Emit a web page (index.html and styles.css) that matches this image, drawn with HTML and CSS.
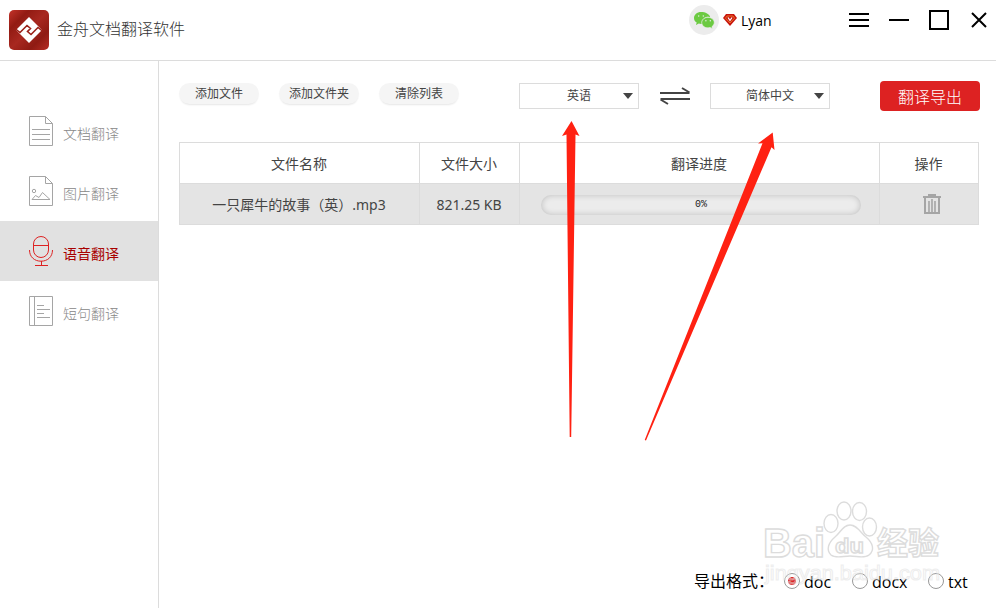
FILE: index.html
```html
<!DOCTYPE html>
<html lang="zh-CN">
<head>
    <meta charset="UTF-8">
    <meta name="viewport" content="width=device-width, initial-scale=1.0">
    <title>金舟文档翻译软件</title>
    <link rel="stylesheet" href="styles.css">
</head>
<body>
    <header class="header">
        <svg class="logo" width="40" height="40" viewBox="0 0 40 40">
            <defs>
                <linearGradient id="logo-bg" x1="0" y1="0" x2="1" y2="1">
                    <stop offset="0" stop-color="#c4332a"/>
                    <stop offset="0.25" stop-color="#921b13"/>
                    <stop offset="0.5" stop-color="#a82820"/>
                    <stop offset="0.75" stop-color="#8f1b13"/>
                    <stop offset="1" stop-color="#b62c23"/>
                </linearGradient>
            </defs>
            <rect width="40" height="40" rx="5" fill="url(#logo-bg)"/>
            <path d="M20 7L33 20L20 33L7 20z" fill="#fff"/>
            <path d="M6 18.500L11 22.500L18 15.500L21.500 18.500L18.500 21.500L22 24.500L29 17.500L34 21.500" fill="none" stroke="#9a2018" stroke-width="1.600"/>
        </svg>
        <h1>金舟文档翻译软件</h1>
        <div class="user">
            <svg width="30" height="30" viewBox="0 0 30 30">
                <circle cx="15" cy="15" r="15" fill="#ececec"/>
                <path d="M12 7c-4 0-7 2.700-7 6 0 2 1 3.500 2.700 4.600L7 20l2.800-1.400c1 .3 2.200.4 3.400.3a6 6 0 0 1 8-6.700C20.500 9 16.500 7 12 7z" fill="#6cca42"/>
                <path d="M19 12.300c-3.500 0-6.300 2.300-6.300 5.300s2.800 5.300 6.300 5.300c.8 0 1.500-.1 2.200-.3l2.300 1.300-.6-2.100c1.500-1 2.400-2.500 2.400-4.200 0-3-2.800-5.300-6.300-5.300z" fill="#6cca42" stroke="#ececec" stroke-width=".8"/>
                <g fill="#ececec">
                    <circle cx="9.700" cy="11" r=".7"/>
                    <circle cx="14.300" cy="11" r=".7"/>
                    <circle cx="16.900" cy="15.800" r=".7"/>
                    <circle cx="21.300" cy="15.800" r=".7"/>
                </g>
            </svg>
            <svg class="vip" width="14" height="12" viewBox="0 0 14 12">
                <path d="M3 0h8l3 4-7 8-7-8z" fill="#c8150f"/>
                <path d="M4 2h6l1.500 2.200L7 9 2.500 4.200z" fill="none" stroke="#f08a2c" stroke-width=".8"/>
                <path d="M5 3.500L7 6.500l2-3" fill="none" stroke="#fff" stroke-width="1.200"/>
            </svg>
            <span>Lyan</span>
        </div>
        <svg class="window-buttons" width="140" height="20" viewBox="0 0 140 20">
            <path d="M1 4h20M1 10h20M1 16h20M41 10h20" stroke="#000" stroke-width="2"/>
            <rect x="82" y="1" width="18" height="18" fill="none" stroke="#000" stroke-width="2"/>
            <path d="M124 3l14 14M138 3l-14 14" stroke="#000" stroke-width="2"/>
        </svg>
    </header>

    <div class="layout">
        <nav class="sidebar">
            <a class="item">
                <svg width="24" height="30" viewBox="0 0 24 30">
                    <path d="M.5.500h16l7 7v22H.500zM16.500.500v7h7M3 13.500h18M3 18.500h18M3 23.500h18"/>
                </svg>
                <span>文档翻译</span>
            </a>
            <a class="item">
                <svg width="24" height="30" viewBox="0 0 24 30">
                    <path d="M.5.500h16l7 7v22H.500zM16.500.500v7h7M3 23.500h18L13.500 16.500 10 21.500 6.500 19.500z"/>
                    <circle cx="5" cy="15" r="1.700"/>
                </svg>
                <span>图片翻译</span>
            </a>
            <a class="item active">
                <svg width="24" height="30" viewBox="0 0 24 30">
                    <rect x="4.500" y=".5" width="15" height="21" rx="7.500"/>
                    <path d="M4.500 9.500h15M.5 14c0 7 5 11.200 11.500 11.200S23.500 21 23.500 14M12.500 25v4M6 29.500h13"/>
                </svg>
                <span>语音翻译</span>
            </a>
            <a class="item">
                <svg width="24" height="30" viewBox="0 0 24 30">
                    <path d="M.5.500h23v29H.500zM5.500.500v29M8 9.500h7M8 13.500h13M8 17.500h7M8 21.500h13"/>
                </svg>
                <span>短句翻译</span>
            </a>
        </nav>

        <main class="main">
            <div class="toolbar">
                <div class="file-buttons">
                    <button>添加文件</button>
                    <button>添加文件夹</button>
                    <button>清除列表</button>
                </div>
                <div class="select">英语</div>
                <svg class="swap" width="30" height="18" viewBox="0 0 30 18">
                    <path d="M0 6h29.500M30 12H.500M22 1l7.500 4.500M8 17L.5 12.500" fill="none" stroke="#444" stroke-width="2"/>
                </svg>
                <div class="select">简体中文</div>
                <button class="export">翻译导出</button>
            </div>

            <table class="files">
                <thead>
                    <tr>
                        <th class="col-name">文件名称</th>
                        <th class="col-size">文件大小</th>
                        <th class="col-progress">翻译进度</th>
                        <th>操作</th>
                    </tr>
                </thead>
                <tbody>
                    <tr>
                        <td>一只犀牛的故事（英）.mp3</td>
                        <td>821.25 KB</td>
                        <td class="cell-icon"><div class="progress">0%</div></td>
                        <td class="cell-icon">
                            <svg class="trash" width="18" height="20" viewBox="0 0 18 20" fill="none" stroke="#a5a5a5">
                                <path d="M0 3h18M5 1h8" stroke-width="2"/>
                                <path d="M2 3v16h14V3" stroke-width="2"/>
                                <path d="M6 7v11M9 5v13M12 7v11" stroke-width="1.600"/>
                            </svg>
                        </td>
                    </tr>
                </tbody>
            </table>

            <div class="format">
                <span class="format-label">导出格式：</span>
                <label class="doc"><input type="radio" name="format" checked><span>doc</span></label>
                <label class="docx"><input type="radio" name="format"><span>docx</span></label>
                <label><input type="radio" name="format"><span>txt</span></label>
            </div>
        </main>
    </div>

    <svg class="overlay" width="996" height="608" viewBox="0 0 996 608">
        <g class="watermark">
            <text x="763" y="557" font-size="40" textLength="62" lengthAdjust="spacingAndGlyphs">Bai</text>
            <ellipse cx="831" cy="523.500" rx="7" ry="9"/>
            <ellipse cx="844" cy="511" rx="7" ry="9"/>
            <ellipse cx="859.500" cy="511.500" rx="7" ry="9"/>
            <ellipse cx="869.500" cy="527" rx="7" ry="9"/>
            <path d="M850 525c-7 0-9 7-15 12-7 6-9 13-4 18 5 4 12 1 19 1s14 3 19-1c6-5 4-12-3-18-6-5-9-12-16-12z"/>
            <text x="835" y="553" font-size="21" textLength="29" lengthAdjust="spacingAndGlyphs">du</text>
            <text x="877" y="554" font-size="31">经验</text>
            <text class="url" x="765" y="580" font-size="20" textLength="175" lengthAdjust="spacingAndGlyphs">jingyan.baidu.com</text>
        </g>
        <g fill="#ff2112">
            <path d="M571.500 121l8 15-4-1.500-4.300 302.500h-1.500L566.500 134.500l-4.500 1.500z"/>
            <path d="M772.700 132.500l1.800 17.500-3-2.800L646 440.500l-1.300-.6L762.500 143.200l-4.500.3z"/>
        </g>
    </svg>
</body>
</html>
```

FILE: styles.css
```css
* {
    box-sizing: border-box;
}

body {
    margin: 0;
    height: 608px;
    overflow: hidden;
    background: #fff;
    color: #444;
    font-family: "Noto Sans", "Noto Sans CJK SC", sans-serif;
    font-size: 14px;
}

button {
    padding: 0;
    border: none;
    font-family: inherit;
    cursor: pointer;
}

.header {
    display: flex;
    height: 61px;
    padding-left: 9px;
    border-bottom: 1px solid #dcdcdc;
}

.logo {
    margin-top: 10px;
}

h1 {
    width: 632px;
    margin: 17px 0 0 8px;
    color: #333;
    font-size: 16px;
    font-weight: 300;
    line-height: 24px;
}

.user {
    display: flex;
    align-items: center;
    width: 160px;
    height: 30px;
    margin-top: 5px;
    color: #000;
    font-family: "Open Sans", sans-serif;
    font-size: 14px;
}

.user .vip {
    margin: 0 4px;
}

.window-buttons {
    margin: 10px 0 0 -1px;
}

.layout {
    display: flex;
    height: 547px;
}

.sidebar {
    width: 159px;
    padding-top: 40px;
    border-right: 1px solid #dcdcdc;
}

.item {
    display: flex;
    align-items: center;
    gap: 10px;
    height: 60px;
    padding-left: 29px;
    color: #888;
    font-weight: 300;
}

.item svg {
    fill: none;
    stroke: #a5a5a5;
}

.item span {
    margin-top: 5px;
    line-height: 20px;
}

.item.active {
    background: #e1e1e1;
    color: #a80000;
    font-weight: 400;
}

.item.active svg {
    stroke: #dd2222;
}

.main {
    display: flex;
    flex-direction: column;
    flex: 1;
    padding: 20px 16px 16px 20px;
}

.toolbar {
    display: flex;
    height: 30px;
}

.file-buttons {
    display: flex;
    gap: 20px;
    width: 340px;
    margin-top: 2px;
}

.file-buttons button {
    width: 80px;
    height: 21px;
    border-radius: 11px;
    background: #f5f5f5;
    box-shadow: 0 2px 2px -1px rgba(0, 0, 0, 0.1);
    color: #444;
    font-size: 12px;
    line-height: 20px;
}

.select {
    position: relative;
    width: 120px;
    height: 26px;
    margin-top: 2px;
    border: 1px solid #dcdcdc;
    font-size: 12px;
    line-height: 23px;
    text-align: center;
}

.select::after {
    content: "";
    position: absolute;
    top: 9px;
    right: 5px;
    border: 5px solid transparent;
    border-top: 6px solid #444;
    border-bottom: none;
}

.swap {
    margin: 6px 20px 0 21px;
}

.export {
    width: 100px;
    margin-left: 50px;
    flex-shrink: 0;
    border-radius: 4px;
    background: #dd2222;
    color: #fff;
    font-size: 16px;
    font-weight: 300;
}

.files {
    width: 800px;
    margin-top: 31px;
    border: 1px solid #dcdcdc;
    border-width: 1px 0 0 1px;
    border-spacing: 0;
    table-layout: fixed;
    text-align: center;
}

.files th,
.files td {
    height: 41px;
    padding: 2px 1px 0 0;
    border: 1px solid #dcdcdc;
    border-width: 0 1px 1px 0;
    font-weight: 400;
    line-height: 20px;
}

.files td {
    background: #e4e4e4;
}

.files .cell-icon {
    padding: 0;
}

.files .col-name {
    width: 240px;
}

.files .col-size {
    width: 100px;
}

.files .col-progress {
    width: 360px;
}

.progress {
    width: 320px;
    height: 20px;
    margin: 1px 0 0 21px;
    border-radius: 10px;
    background: #ececec;
    box-shadow: inset 0 0 6px rgba(0, 0, 0, 0.2);
    color: #222;
    font-family: "Liberation Mono", monospace;
    font-size: 10px;
}

.trash {
    display: block;
    margin: 0 auto;
    position: relative;
    left: 3px;
}

.format {
    display: flex;
    align-items: center;
    height: 22px;
    margin-top: auto;
    padding-left: 515px;
    color: #000;
    font-size: 16px;
    line-height: 22px;
}

.format-label {
    width: 90px;
}

.format label {
    display: flex;
    align-items: center;
    font-family: "Open Sans", sans-serif;
}

.format label span {
    padding-top: 1px;
}

.format .doc {
    width: 68px;
}

.format .docx {
    width: 76px;
}

.format input {
    appearance: none;
    width: 16px;
    height: 16px;
    margin: 0 4px 0 0;
    border: 1px solid #999;
    border-radius: 50%;
    background: #fff;
}

.format input:checked {
    background: radial-gradient(circle, #dd2222 3.5px, #fff 4.5px);
}

.overlay {
    position: absolute;
    top: 0;
    left: 0;
    pointer-events: none;
}

.watermark {
    fill: #fff;
    fill-opacity: 0.6;
    stroke: #dcdcdc;
    stroke-width: 1.4;
    font-family: "Liberation Sans", "Noto Sans CJK SC", sans-serif;
    font-weight: bold;
}

.watermark .url {
    fill-opacity: 0.25;
    stroke-opacity: 0.5;
    stroke-width: 1;
    font-weight: normal;
}
```
